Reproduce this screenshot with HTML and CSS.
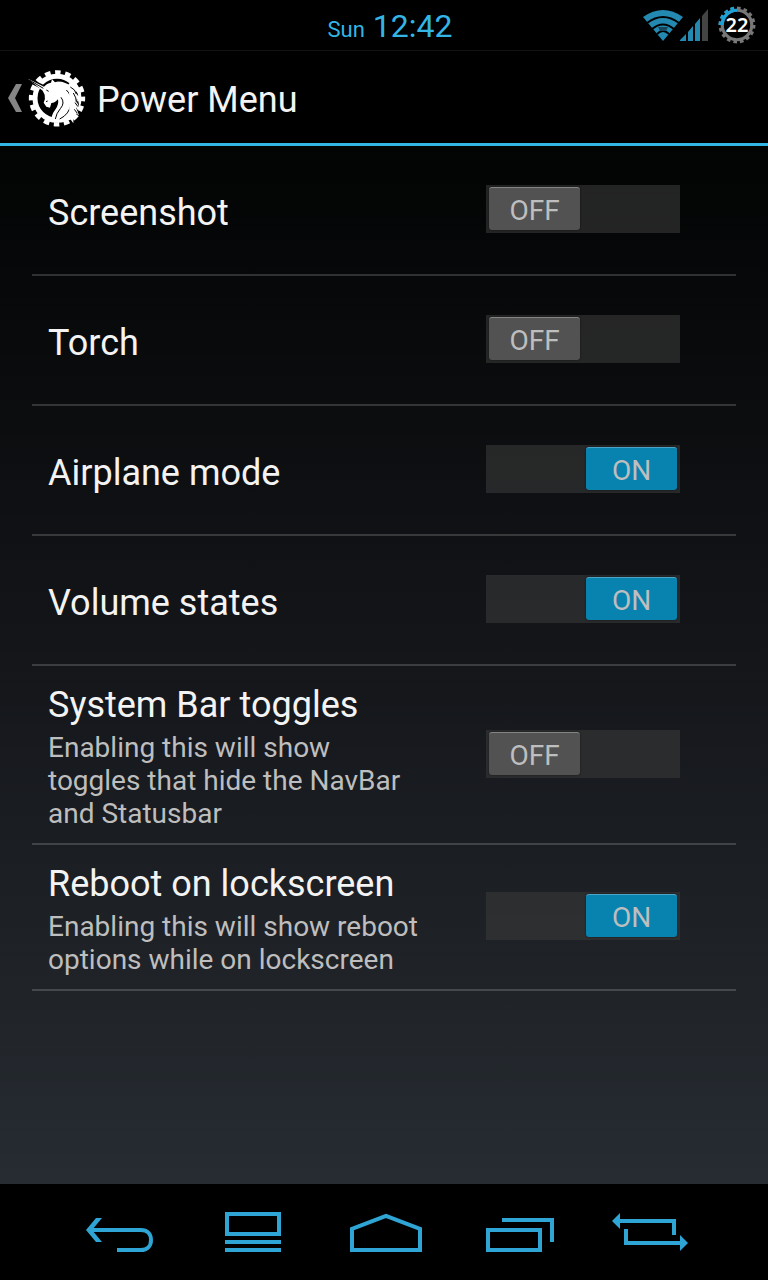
FILE: index.html
```html
<!DOCTYPE html>
<html lang="en">
<head>
    <meta charset="UTF-8">
    <meta name="viewport" content="width=device-width, initial-scale=1.0">
    <title>Power Menu</title>
    <link rel="stylesheet" href="styles.css">
</head>
<body>
    <div class="status-bar">
        <div class="clock"><span class="clock-day">Sun</span> 12:42</div>
        <div class="status-icons">
            <svg class="icon-wifi" viewBox="0 0 40 32" aria-hidden="true">
                <path fill="#2489b1" d="M0 8Q20-6 40 8L20 32Z"/>
                <g fill="none" stroke="#000" stroke-width="2">
                    <path d="M4 14Q20 2 36 14"/>
                    <path d="M9 20Q20 11 31 20"/>
                    <path d="M14 25Q20 19 26 25"/>
                </g>
                <path fill="#17465a" d="M15 18h10l-2 4h-6z"/>
            </svg>
            <svg class="icon-signal" viewBox="0 0 28 32" aria-hidden="true">
                <path fill="#2489b1" d="M0 32V31L6 25V32ZM8 32V23L13 17V32ZM15 32V15L20 9V32Z"/>
                <path fill="#444" d="M22 32V7L28 0V32Z"/>
            </svg>
            <div class="battery">
                <svg viewBox="0 0 36 36" aria-hidden="true">
                    <g fill="none" stroke="#777">
                        <circle cx="18" cy="18" r="14" stroke-width="3"/>
                        <circle cx="18" cy="18" r="16" stroke-width="3" pathLength="32" stroke-dasharray="1.1 0.9"/>
                    </g>
                    <g fill="none" stroke="#1ba1d8">
                        <path d="M4 18A14 14 0 0 1 18 4" stroke-width="3"/>
                        <path d="M2 18A16 16 0 0 1 18 2" stroke-width="3" pathLength="8" stroke-dasharray="1.1 0.9"/>
                    </g>
                </svg>
                <span class="battery-level">22</span>
            </div>
        </div>
    </div>

    <header class="action-bar">
        <a class="up" href="#" aria-label="Back">
            <svg class="icon-up" viewBox="0 0 14 28" aria-hidden="true">
                <path fill="#858585" d="M8 0h6L7 14l7 14H8L0 14z"/>
            </svg>
            <svg class="logo" viewBox="0 0 180 180" aria-hidden="true">
                <circle cx="90" cy="91" r="78" fill="none" stroke="#fff" stroke-width="13" pathLength="32" stroke-dasharray="1.1 0.9" stroke-dashoffset="0.5"/>
                <circle cx="90" cy="91" r="66" fill="none" stroke="#fff" stroke-width="15"/>
                <path fill="#000" d="M0 26L58 55 52 68 8 44z"/>
                <!-- horn, head and neck -->
                <path fill="#fff" d="M3 32L51 56Q60 45 72 44L75 34Q81 40 84 43Q109 34 129 51Q147 65 149 94Q150 119 133 140L142 151 112 162 78 157Q68 147 86 123Q96 109 93 94Q84 105 73 105L69 119 58 116 50 104Q56 94 53 80L47 68Z"/>
                <path fill="#000" d="M88 39Q113 33 132 51L122 48Q105 39 88 39ZM135 58Q151 67 154 84L145 75ZM145 86Q158 98 155 116L149 105ZM147 118L156 132 141 126Z"/>
                <path fill="none" stroke="#000" stroke-width="3" d="M118 66Q135 81 132 108Q127 139 98 153M102 88Q115 105 100 122Q88 136 85 153M7 36L49 61M58 66L65 70M57 101L62 99"/>
                <path fill="#fff" d="M126 45Q155 54 160 83L146 68L154 103L145 91L158 122L146 116L156 142L140 132L139 166L127 149Z"/>
                <path fill="none" stroke="#000" stroke-width="3" d="M130 57Q145 64 148 78M139 75Q149 90 148 103M144 104L153 116M142 124L151 136"/>
            </svg>
        </a>
        <h1>Power Menu</h1>
    </header>

    <main class="settings">
        <div class="setting">
            <label class="setting-text" for="screenshot">
                <span class="setting-title">Screenshot</span>
            </label>
            <label class="switch">
                <input type="checkbox" id="screenshot">
                <span class="thumb thumb-off">OFF</span>
                <span class="thumb thumb-on">ON</span>
            </label>
        </div>
        <div class="setting">
            <label class="setting-text" for="torch">
                <span class="setting-title">Torch</span>
            </label>
            <label class="switch">
                <input type="checkbox" id="torch">
                <span class="thumb thumb-off">OFF</span>
                <span class="thumb thumb-on">ON</span>
            </label>
        </div>
        <div class="setting">
            <label class="setting-text" for="airplane">
                <span class="setting-title">Airplane mode</span>
            </label>
            <label class="switch">
                <input type="checkbox" id="airplane" checked>
                <span class="thumb thumb-off">OFF</span>
                <span class="thumb thumb-on">ON</span>
            </label>
        </div>
        <div class="setting">
            <label class="setting-text" for="volume">
                <span class="setting-title">Volume states</span>
            </label>
            <label class="switch">
                <input type="checkbox" id="volume" checked>
                <span class="thumb thumb-off">OFF</span>
                <span class="thumb thumb-on">ON</span>
            </label>
        </div>
        <div class="setting">
            <label class="setting-text" for="systembar">
                <span class="setting-title">System Bar toggles</span>
                <span class="setting-summary">Enabling this will show toggles that hide the NavBar and Statusbar</span>
            </label>
            <label class="switch">
                <input type="checkbox" id="systembar">
                <span class="thumb thumb-off">OFF</span>
                <span class="thumb thumb-on">ON</span>
            </label>
        </div>
        <div class="setting">
            <label class="setting-text" for="reboot">
                <span class="setting-title">Reboot on lockscreen</span>
                <span class="setting-summary">Enabling this will show reboot options while on lockscreen</span>
            </label>
            <label class="switch">
                <input type="checkbox" id="reboot" checked>
                <span class="thumb thumb-off">OFF</span>
                <span class="thumb thumb-on">ON</span>
            </label>
        </div>
    </main>

    <nav class="nav-bar">
        <button type="button" aria-label="Back">
            <svg viewBox="0 0 80 60">
                <path d="M9 28H61C67 28 71 32 71 38S67 48 61 48H37"/>
                <path class="arrow" d="M6 28L16 16H22L12 28L22 40H16Z"/>
            </svg>
        </button>
        <button type="button" aria-label="Menu">
            <svg viewBox="0 0 80 60">
                <path d="M14 12H66V32H14ZM12 40H68M12 48H68"/>
            </svg>
        </button>
        <button type="button" aria-label="Home">
            <svg viewBox="0 0 80 60">
                <path d="M6 48V27L40 14L74 27V48Z"/>
            </svg>
        </button>
        <button type="button" aria-label="Recent apps">
            <svg viewBox="0 0 80 60">
                <path d="M9 28H61V48H9ZM23 18H73V40"/>
            </svg>
        </button>
        <button type="button" aria-label="Switch app">
            <svg viewBox="0 0 80 60">
                <path d="M7 19H62V33M14 27V41H70"/>
                <path class="arrow" d="M0 19L8 11V27ZM76 41L68 33V49Z"/>
            </svg>
        </button>
    </nav>
</body>
</html>
```
FILE: styles.css
```css
* {
    margin: 0;
    padding: 0;
    box-sizing: border-box;
}

body {
    font-family: Roboto, sans-serif;
    background: #000;
    color: #f3f3f3;
    min-height: 100vh;
    display: flex;
    flex-direction: column;
}

svg {
    display: block;
}

/* status bar */
.status-bar {
    height: 50px;
    padding: 0 12px 0 24px;
    display: grid;
    grid-template-columns: 1fr auto 1fr;
    align-items: center;
}

.clock {
    grid-column: 2;
    padding-top: 5px;
    font-size: 32px;
    line-height: 42px;
    color: #33b5e5;
}

.clock-day {
    font-size: 22px;
}

.status-icons {
    padding-bottom: 2px;
    display: flex;
    align-items: center;
    justify-content: flex-end;
}

.icon-wifi {
    width: 40px;
    height: 32px;
}

.icon-signal {
    width: 28px;
    height: 32px;
    margin: 0 10px 0 -3px;
}

.battery {
    display: grid;
    place-items: center;
}

.battery svg,
.battery-level {
    grid-area: 1 / 1;
}

.battery svg {
    width: 38px;
    height: 38px;
}

.battery-level {
    font-family: "Noto Sans", sans-serif;
    font-size: 20px;
    font-weight: 600;
    line-height: 20px;
    color: #fff;
}

/* title bar */
.action-bar {
    height: 96px;
    padding: 2px 0 0 8px;
    border-top: 1px solid #121212;
    border-bottom: 3px solid #33b5e5;
    display: flex;
    align-items: center;
    gap: 10px;
}

.up {
    display: flex;
    align-items: center;
    gap: 5px;
}

.icon-up {
    width: 14px;
    height: 28px;
}

.logo {
    width: 60px;
    height: 60px;
}

.action-bar h1 {
    padding-top: 4px;
    font-size: 36px;
    font-weight: 400;
    line-height: 42px;
}

/* settings list */
.settings {
    flex: 1;
    padding: 0 32px;
    background: linear-gradient(#020303, #14161a 50%, #272c32);
}

.setting {
    min-height: 130px;
    padding: 0 56px 0 16px;
    border-bottom: 2px solid rgba(255, 255, 255, 0.17);
    display: flex;
    align-items: center;
    justify-content: space-between;
    gap: 60px;
}

.setting-text {
    flex: 1;
    padding: 18px 0 13px;
    display: flex;
    flex-direction: column;
    gap: 5px;
}

.setting-title {
    font-size: 36px;
    line-height: 42px;
    white-space: nowrap;
}

.setting-summary {
    font-size: 28px;
    line-height: 33px;
    color: #bebebe;
}

.switch {
    width: 194px;
    height: 48px;
    margin-bottom: 2px;
    display: grid;
    align-items: start;
    cursor: pointer;
}

.switch input,
.thumb {
    grid-area: 1 / 1;
}

.switch input {
    appearance: none;
    width: 100%;
    height: 100%;
    background: rgba(56, 56, 56, 0.6);
    cursor: pointer;
}

.thumb {
    width: 91px;
    height: 43px;
    margin: 2px 3px;
    border-radius: 3px;
    border-top: 1px solid #858585;
    background: #525252;
    box-shadow: 0 0 2px rgba(0, 0, 0, 0.6);
    color: #bebebe;
    font-size: 28px;
    line-height: 46px;
    text-align: center;
    z-index: 1;
}

.thumb-on {
    justify-self: end;
    border-top-color: #4aa5c8;
    background: #0883b0;
}

.switch input:checked ~ .thumb-off,
.switch input:not(:checked) ~ .thumb-on {
    display: none;
}

/* navigation keys */
.nav-bar {
    height: 96px;
    padding: 0 50px 0 54px;
    display: flex;
}

.nav-bar button {
    flex: 1;
    border: none;
    background: none;
    display: flex;
    align-items: center;
    justify-content: center;
    cursor: pointer;
}

.nav-bar svg {
    width: 80px;
    height: 60px;
    fill: none;
    stroke: #2fa5d5;
    stroke-width: 4;
}

.nav-bar .arrow {
    fill: #2fa5d5;
    stroke: none;
}
```
